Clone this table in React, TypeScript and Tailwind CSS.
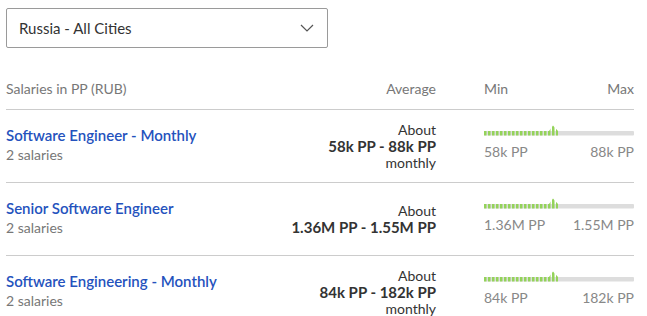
import React from "react";

type Row = { title: string; count: string; range: string; monthly: boolean; min: string; max: string };

const rows: Row[] = [
  { title: "Software Engineer - Monthly", count: "2 salaries", range: "58k PP - 88k PP", monthly: true, min: "58k PP", max: "88k PP" },
  { title: "Senior Software Engineer", count: "2 salaries", range: "1.36M PP - 1.55M PP", monthly: false, min: "1.36M PP", max: "1.55M PP" },
  { title: "Software Engineering - Monthly", count: "2 salaries", range: "84k PP - 182k PP", monthly: true, min: "84k PP", max: "182k PP" },
];

function Bar({ id }: { id: string }) {
  return (
    <svg width="150" height="13" viewBox="0 0 150 13" className="block">
      <defs>
        <pattern id={id} width="4" height="13" patternUnits="userSpaceOnUse">
          <rect x="0" y="0" width="2.5" height="13" fill="#94d35a" />
        </pattern>
      </defs>
      <rect x="0" y="7" width="150" height="4.5" fill="#dddddd" rx="1" />
      <path d="M0 7 H65 L69 1.5 L74 7 V11.5 H0 Z" fill={`url(#${id})`} />
    </svg>
  );
}

export default function App() {
  return (
    <div className="w-[647px] h-[316px] overflow-hidden bg-white px-[6px] pt-[8px]" style={{ fontFamily: "Lato, 'Open Sans', sans-serif" }}>
      <div className="w-[322px] h-[40px] border border-[#9a9a9a] rounded-[2px] flex items-center justify-between pl-[12px] pr-[12px]">
        <span className="text-[15px] text-[#333333]">Russia - All Cities</span>
        <svg width="14" height="8" viewBox="0 0 14 8" className="mr-[1px]">
          <path d="M1 1 L7 7 L13 1" fill="none" stroke="#555" strokeWidth="1.2" />
        </svg>
      </div>
      <div className="w-[628px] mt-[22px]">
        <div className="flex items-center h-[40px] border-b border-[#cccccc] text-[14px] text-[#777777] pb-[2px]">
          <div className="flex-1">Salaries in PP (RUB)</div>
          <div className="text-right">Average</div>
          <div className="w-[150px] ml-[48px] flex justify-between">
            <span>Min</span>
            <span>Max</span>
          </div>
        </div>
        {rows.map((r, i) => (
          <div key={i} className="flex items-center h-[73px] border-b border-[#cccccc]">
            <div className="flex-1 flex flex-col pb-[3px]">
              <span className="text-[15px] font-semibold text-[#2452bd] leading-[20px]">{r.title}</span>
              <span className="text-[14px] text-[#777777] leading-[19px]">{r.count}</span>
            </div>
            <div className="flex flex-col items-end text-right text-[#333333]">
              <span className="text-[14px] leading-[16px]">About</span>
              <span className="text-[15px] font-bold leading-[17px]">{r.range}</span>
              {r.monthly && <span className="text-[14px] leading-[15px]">monthly</span>}
            </div>
            <div className="w-[150px] ml-[48px] flex flex-col pb-[8px]">
              <Bar id={`p${i}`} />
              <div className="flex justify-between text-[14px] text-[#888888] leading-[17px] mt-[6px]">
                <span>{r.min}</span>
                <span>{r.max}</span>
              </div>
            </div>
          </div>
        ))}
      </div>
    </div>
  );
}
